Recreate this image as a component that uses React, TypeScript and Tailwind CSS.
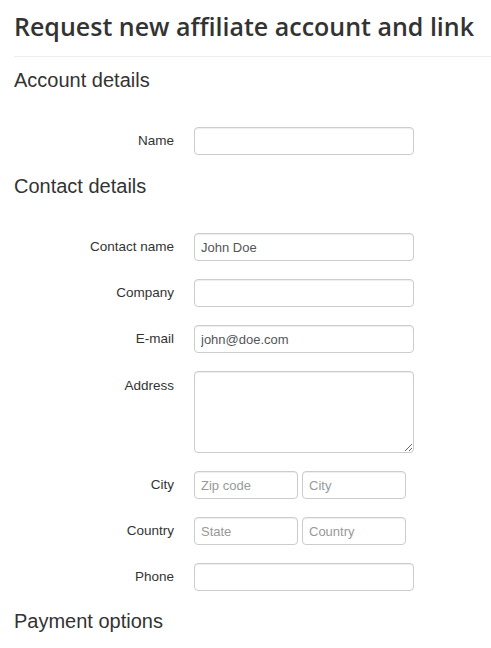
const inputClass =
    "h-[28px] rounded-[4px] border border-[#ccc] bg-white px-[6px] text-[13px] text-[#555] shadow-[inset_0_1px_1px_rgba(0,0,0,0.075)] outline-none placeholder:text-[#999]";

interface RowProps {
    label: string;
    top?: boolean;
    children: React.ReactNode;
};

const FormRow = (props: RowProps) => {
    const { label, top, children } = props;

    return (
        <div className={`flex ${top ? "items-start" : "items-center"}`}>
            <label className={`w-[174px] text-right text-[13.5px] text-[#333] ${top ? "pt-[5px]" : ""}`}>
                {label}
            </label>
            <div className="ml-[20px] flex gap-[4px]">
                {children}
            </div>
        </div>
    );
};

const SectionTitle = ({ children, className }: { children: React.ReactNode; className?: string }) => {
    return (
        <h2 className={`ml-[14px] text-[20px] leading-[22px] text-[#333] ${className ?? ""}`}>
            {children}
        </h2>
    );
};

export default function App() {
    return (
        <div className="min-h-[648px] w-[491px] bg-white font-['Liberation_Sans',Arial,sans-serif]">
            <h1 className="ml-[14px] border-b border-[#eee] pt-[11px] pb-[15px] font-['Open_Sans',sans-serif] text-[25px] font-semibold leading-[30px] text-[#333]">
                Request new affiliate account and link
            </h1>

            <SectionTitle className="mt-[12px]">Account details</SectionTitle>

            <div className="mt-[36px]">
                <FormRow label="Name">
                    <input className={`${inputClass} w-[220px]`} />
                </FormRow>
            </div>

            <SectionTitle className="mt-[20px]">Contact details</SectionTitle>

            <div className="mt-[36px] flex flex-col gap-[18px]">
                <FormRow label="Contact name">
                    <input className={`${inputClass} w-[220px]`} defaultValue="John Doe" />
                </FormRow>
                <FormRow label="Company">
                    <input className={`${inputClass} w-[220px]`} />
                </FormRow>
                <FormRow label="E-mail">
                    <input className={`${inputClass} w-[220px]`} defaultValue="john@doe.com" />
                </FormRow>
                <FormRow label="Address" top>
                    <textarea className="block h-[82px] w-[220px] rounded-[4px] border border-[#ccc] bg-white px-[6px] py-[4px] text-[13px] text-[#555] shadow-[inset_0_1px_1px_rgba(0,0,0,0.075)] outline-none" />
                </FormRow>
                <FormRow label="City">
                    <input className={`${inputClass} w-[104px]`} placeholder="Zip code" />
                    <input className={`${inputClass} w-[104px]`} placeholder="City" />
                </FormRow>
                <FormRow label="Country">
                    <input className={`${inputClass} w-[104px]`} placeholder="State" />
                    <input className={`${inputClass} w-[104px]`} placeholder="Country" />
                </FormRow>
                <FormRow label="Phone">
                    <input className={`${inputClass} w-[220px]`} />
                </FormRow>
            </div>

            <SectionTitle className="mt-[19px]">Payment options</SectionTitle>
        </div>
    );
}
